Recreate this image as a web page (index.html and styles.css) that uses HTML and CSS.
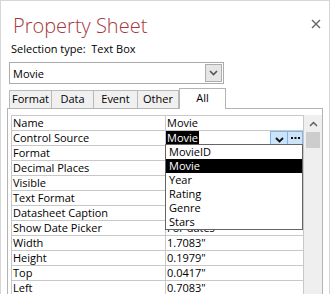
FILE: index.html
```html
<!DOCTYPE html>
<html lang="en">
<head>
    <meta charset="UTF-8">
    <title>Property Sheet</title>
    <link rel="stylesheet" href="styles.css">
</head>
<body>
    <div class="sheet">
        <div class="head">
            <h1 class="title">Property Sheet</h1>
            <svg class="close" width="10" height="10" viewBox="0 0 10 10">
                <path d="M1 1 L9 9 M9 1 L1 9" stroke="#666" stroke-width="1.4" fill="none"/>
            </svg>
        </div>
        <div class="sel-type">Selection type:&nbsp; Text Box</div>

        <div class="combo">
            <span class="combo-text">Movie</span>
            <span class="combo-btn">
                <svg width="9" height="6" viewBox="0 0 9 6"><path d="M1 1 L4.5 4.5 L8 1" stroke="#555" stroke-width="1.6" fill="none"/></svg>
            </span>
        </div>

        <div class="tabs">
            <div class="tab">Format</div>
            <div class="tab">Data</div>
            <div class="tab">Event</div>
            <div class="tab">Other</div>
            <div class="tab active">All</div>
        </div>

        <div class="panel">
            <div class="grid">
                <div class="row"><div class="lbl">Name</div><div class="val">Movie</div></div>
                <div class="row">
                    <div class="lbl">Control Source</div>
                    <div class="val editing">
                        <span class="sel">Movie</span>
                        <span class="cell-btn drop">
                            <svg width="9" height="6" viewBox="0 0 9 6"><path d="M1 1 L4.5 4.5 L8 1" stroke="#111" stroke-width="1.8" fill="none"/></svg>
                        </span>
                        <span class="cell-btn dots">
                            <svg width="9" height="3" viewBox="0 0 9 3"><path d="M0 0h2v2h-2z M3.5 0h2v2h-2z M7 0h2v2h-2z" fill="#111"/></svg>
                        </span>
                    </div>
                </div>
                <div class="row"><div class="lbl">Format</div><div class="val"></div></div>
                <div class="row"><div class="lbl">Decimal Places</div><div class="val"></div></div>
                <div class="row"><div class="lbl">Visible</div><div class="val"></div></div>
                <div class="row"><div class="lbl">Text Format</div><div class="val"></div></div>
                <div class="row"><div class="lbl">Datasheet Caption</div><div class="val"></div></div>
                <div class="row"><div class="lbl">Show Date Picker</div><div class="val">For dates</div></div>
                <div class="row"><div class="lbl">Width</div><div class="val">1.7083"</div></div>
                <div class="row"><div class="lbl">Height</div><div class="val">0.1979"</div></div>
                <div class="row"><div class="lbl">Top</div><div class="val">0.0417"</div></div>
                <div class="row"><div class="lbl">Left</div><div class="val">0.7083"</div></div>

                <ul class="list">
                    <li>MovieID</li>
                    <li class="current">Movie</li>
                    <li>Year</li>
                    <li>Rating</li>
                    <li>Genre</li>
                    <li>Stars</li>
                </ul>
            </div>
            <div class="scroll">
                <div class="arrow">
                    <svg width="9" height="6" viewBox="0 0 9 6"><path d="M1 5 L4.5 1.5 L8 5" stroke="#606060" stroke-width="1.5" fill="none"/></svg>
                </div>
                <div class="thumb"></div>
            </div>
        </div>
    </div>
</body>
</html>
```

FILE: styles.css
```css
body {
    margin: 0;
    width: 330px;
    height: 294px;
    overflow: hidden;
    font-family: "Open Sans", "Noto Sans", sans-serif;
    font-size: 11px;
    color: #000;
    background: #fff;
}
.sheet {
    box-sizing: border-box;
    height: 294px;
    border: 1px solid #d6d6d6;
    border-bottom: none;
    padding-left: 6px;
}
.head {
    display: flex;
    justify-content: space-between;
    align-items: flex-start;
    height: 38px;
}
.title {
    margin: 0;
    padding: 11px 0 0 6px;
    font-size: 20px;
    font-weight: 300;
    line-height: 27px;
    color: #a4373a;
}
.close {
    margin: 18px 8px 0 0;
}
.sel-type {
    margin-top: 2px;
    padding-left: 4px;
    line-height: 16px;
}
.combo {
    box-sizing: border-box;
    display: flex;
    align-items: center;
    justify-content: space-between;
    width: 215px;
    height: 22px;
    margin: 5px 0 0 2px;
    border: 1px solid #ababab;
    padding: 0 1px 0 3px;
}
.combo-btn {
    box-sizing: border-box;
    display: flex;
    align-items: center;
    justify-content: center;
    width: 17px;
    height: 18px;
    background: #e6e6e6;
    border: 1px solid #adadad;
}
.tabs {
    display: flex;
    align-items: flex-end;
    height: 20px;
    margin: 4px 0 0 2px;
}
.tab {
    box-sizing: border-box;
    height: 18px;
    line-height: 16px;
    padding: 0;
    background: #f0f0f0;
    border: 1px solid #b9b9b9;
    border-bottom: none;
    border-left: none;
    text-align: center;
}
.tab:first-child {
    border-left: 1px solid #b9b9b9;
}
.tab:nth-child(1) { width: 43px; }
.tab:nth-child(2) { width: 42px; }
.tab:nth-child(3) { width: 44px; }
.tab:nth-child(4) { width: 41px; }
.tab.active {
    position: relative;
    z-index: 1;
    width: 47px;
    height: 21px;
    margin-bottom: -1px;
    line-height: 18px;
    background: #fff;
    border-left: 1px solid #b4b4b4;
    border-color: #b4b4b4;
}
.panel {
    box-sizing: border-box;
    display: flex;
    width: 316px;
    height: 190px;
    border: 1px solid #b4b4b4;
    padding: 6px 0 0 3px;
}
.grid {
    position: relative;
    width: 293px;
    border-top: 1px solid #c8c8c8;
    border-left: 1px solid #c8c8c8;
    border-right: 1px solid #c8c8c8;
    box-sizing: border-box;
    align-self: flex-start;
}
.row {
    display: flex;
    height: 15px;
    box-sizing: border-box;
    border-bottom: 1px solid #c8c8c8;
    line-height: 14px;
}
.lbl {
    width: 152px;
    padding-left: 1px;
    border-right: 1px solid #c8c8c8;
    white-space: nowrap;
}
.val {
    flex: 1;
    padding-left: 1px;
    white-space: nowrap;
}
.val.editing {
    display: flex;
    padding-left: 0;
}
.sel {
    background: #000;
    color: #fff;
    padding: 0 1px;
}
.cell-btn {
    box-sizing: border-box;
    display: flex;
    align-items: flex-end;
    justify-content: center;
    width: 18px;
    height: 15px;
    background: #cce4f7;
    border: 1px solid #7eb4ea;
    padding-bottom: 2px;
}
.cell-btn.drop {
    margin-left: auto;
}
.cell-btn.dots {
    width: 16px;
    margin-left: -1px;
    align-items: center;
    padding-bottom: 0;
}
.list {
    position: absolute;
    top: 28px;
    left: 153px;
    width: 138px;
    box-sizing: border-box;
    margin: 0;
    padding: 0;
    list-style: none;
    background: #fff;
    border: 1px solid #646464;
}
.list li {
    height: 14px;
    line-height: 14px;
    padding-left: 3px;
}
.list li.current {
    background: #000;
    color: #fff;
}
.scroll {
    width: 18px;
    background: #efefef;
}
.arrow {
    display: flex;
    justify-content: center;
    padding-top: 6px;
    height: 11px;
}
.thumb {
    width: 14px;
    height: 16px;
    margin: 0 auto;
    background: #cdcdcd;
}
```
